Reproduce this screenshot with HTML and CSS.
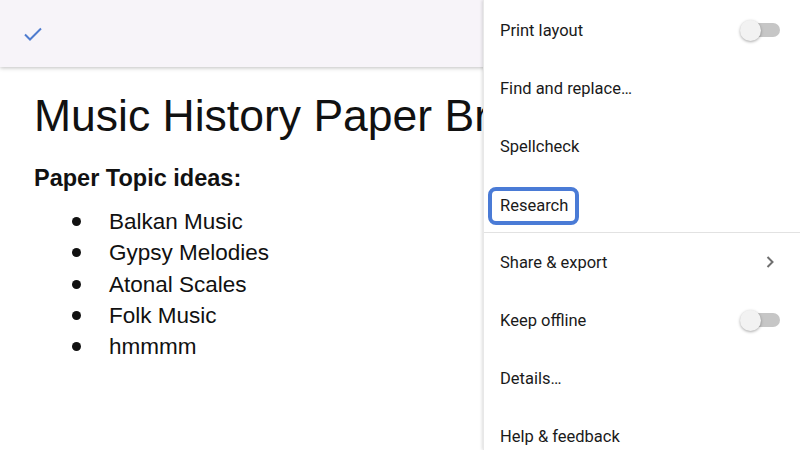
FILE: index.html
```html
<!DOCTYPE html>
<html>
<head>
<meta charset="utf-8">
<link rel="stylesheet" href="styles.css">
</head>
<body>
<div class="screen">
  <header class="toolbar">
    <svg class="check" width="20" height="16" viewBox="0 0 20 16"><path d="M2 8.5 L7 13.5 L18 2.5" fill="none" stroke="#4f7ccf" stroke-width="2"/></svg>
  </header>
  <main class="doc">
    <h1 class="title">Music History Paper Brainstorm</h1>
    <h2 class="subhead">Paper Topic ideas:</h2>
    <ul class="list">
      <li><span class="dot"></span>Balkan Music</li>
      <li><span class="dot"></span>Gypsy Melodies</li>
      <li><span class="dot"></span>Atonal Scales</li>
      <li><span class="dot"></span>Folk Music</li>
      <li><span class="dot"></span>hmmmm</li>
    </ul>
  </main>
  <nav class="menu">
    <div class="item"><span>Print layout</span><span class="toggle"><span class="thumb"></span></span></div>
    <div class="item"><span>Find and replace…</span></div>
    <div class="item"><span>Spellcheck</span></div>
    <div class="item divider"><span class="highlight">Research</span></div>
    <div class="item"><span>Share &amp; export</span><svg class="chev" width="10" height="14" viewBox="0 0 10 14"><path d="M2.5 2 L7.5 7 L2.5 12" fill="none" stroke="#6f6f6f" stroke-width="2"/></svg></div>
    <div class="item"><span>Keep offline</span><span class="toggle"><span class="thumb"></span></span></div>
    <div class="item"><span>Details…</span></div>
    <div class="item"><span>Help &amp; feedback</span></div>
  </nav>
</div>
</body>
</html>
```
FILE: styles.css
```css
* { box-sizing: border-box; }
html, body { margin: 0; padding: 0; }
body { width: 800px; height: 450px; overflow: hidden; background: #fff; }
.screen { position: relative; width: 800px; height: 450px; overflow: hidden; }
.toolbar {
  height: 67px;
  background: #f7f4f9;
  box-shadow: 0 1px 4px rgba(0,0,0,0.25);
  display: flex;
  align-items: center;
  padding-left: 23px;
  position: relative;
  z-index: 1;
}
.check { display: block; margin-top: 1px; }
.doc {
  width: 483px;
  overflow: hidden;
  padding: 23px 0 0 34px;
  font-family: "Liberation Sans", Arial, sans-serif;
  color: #111;
  white-space: nowrap;
}
.title {
  margin: 0;
  font-size: 44.5px;
  font-weight: normal;
  line-height: 52px;
  overflow: hidden;
}
.subhead {
  margin: 22px 0 0 0;
  font-size: 23.5px;
  font-weight: bold;
  line-height: 28px;
}
.list {
  list-style: none;
  margin: 14px 0 0 0;
  padding: 0 0 0 38px;
  font-size: 22.5px;
  line-height: 31.3px;
}
.list li { display: flex; align-items: center; }
.dot {
  width: 9px; height: 9px; border-radius: 50%;
  background: #111;
  margin-right: 28px;
}
.menu {
  position: absolute;
  top: 0; right: 0;
  width: 317px;
  height: 450px;
  background: #fff;
  box-shadow: -1px 0 3px rgba(0,0,0,0.14);
  border-left: 1px solid #e8e8e8;
  z-index: 2;
  padding-top: 1px;
  font-family: Roboto, "Noto Sans", sans-serif;
  font-size: 16.5px;
  color: #1a1a1a;
}
.item {
  height: 58px;
  display: flex;
  align-items: center;
  justify-content: space-between;
  padding: 0 20px 0 16px;
}
.item.divider { border-bottom: 1px solid #e2e2e2; }
.highlight {
  border: 4px solid #4a7bd6;
  border-radius: 8px;
  padding: 5px 7px 5px 8px;
  margin: 4px 0 0 -12px;
  line-height: 20px;
}
.toggle {
  position: relative;
  width: 40px;
  height: 20px;
  display: flex;
  align-items: center;
  justify-content: flex-end;
}
.toggle::before {
  content: "";
  width: 31px; height: 14px;
  border-radius: 7px;
  background: #c6c6c6;
}
.thumb {
  position: absolute;
  left: 0; top: 0;
  width: 21px; height: 21px;
  border-radius: 50%;
  background: #f2f2f2;
  box-shadow: 0 1px 3px rgba(0,0,0,0.35);
}
.chev { display: block; margin-right: 5px; }
```
